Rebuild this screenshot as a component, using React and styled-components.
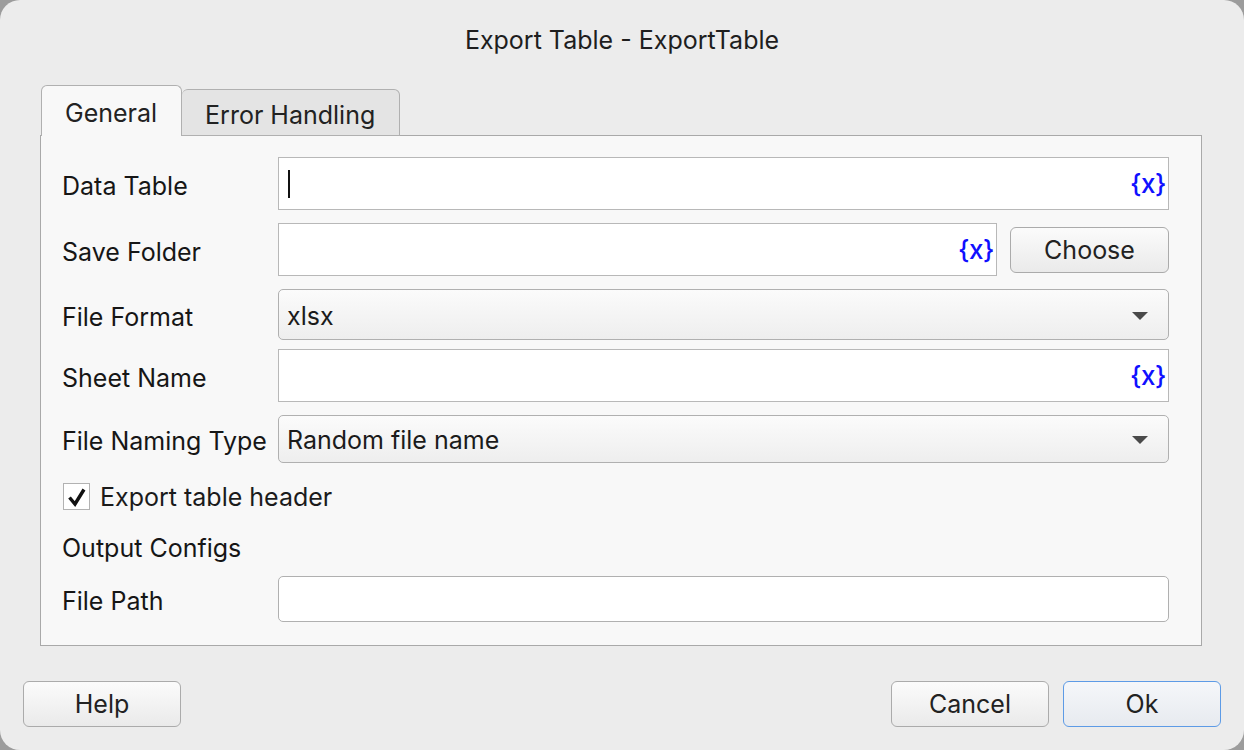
import styled, { createGlobalStyle } from "styled-components";

const GlobalStyle = createGlobalStyle`
  html, body {
    margin: 0;
    padding: 0;
    background: #9c9c9c;
  }
  body {
    font-family: Inter, "Liberation Sans", Arial, sans-serif;
    -webkit-font-smoothing: antialiased;
  }
`;

const fields = [
  { label: "Data Table", kind: "var", caret: true, h: 53, gap: 0 },
  { label: "Save Folder", kind: "folder", h: 53, gap: 13 },
  { label: "File Format", kind: "select", value: "xlsx", h: 51, gap: 13 },
  { label: "Sheet Name", kind: "var", h: 53, gap: 9 },
  { label: "File Naming Type", kind: "select", value: "Random file name", h: 48, gap: 13 },
];

export default function App() {
  return (
    <>
      <GlobalStyle />
      <Window>
        <Title>Export Table - ExportTable</Title>
        <Tabs>
          <Tab $active>General</Tab>
          <Tab>Error Handling</Tab>
        </Tabs>
        <Panel>
          {fields.map((f) => (
            <Row key={f.label} $h={f.h} $gap={f.gap}>
              <Label>{f.label}</Label>
              {f.kind === "var" && (
                <TextBox>
                  {f.caret && <Caret />}
                  <VarMark>{"{x}"}</VarMark>
                </TextBox>
              )}
              {f.kind === "folder" && (
                <>
                  <TextBox>
                    <VarMark>{"{x}"}</VarMark>
                  </TextBox>
                  <ChooseButton>Choose</ChooseButton>
                </>
              )}
              {f.kind === "select" && (
                <Select>
                  <span>{f.value}</span>
                  <Arrow />
                </Select>
              )}
            </Row>
          ))}
          <CheckRow>
            <CheckBox>
              <svg width="20" height="20" viewBox="0 0 20 20">
                <path d="M2.5 10.5 L8 17 L17 2.5" fill="none" stroke="#111" strokeWidth="3.4" strokeLinejoin="miter" />
              </svg>
            </CheckBox>
            <span>Export table header</span>
          </CheckRow>
          <Section>Output Configs</Section>
          <Row $h={46} $gap={13}>
            <Label>File Path</Label>
            <PathBox />
          </Row>
        </Panel>
        <Footer>
          <Button>Help</Button>
          <Spacer />
          <Button>Cancel</Button>
          <Button $primary>Ok</Button>
        </Footer>
      </Window>
    </>
  );
}

const Window = styled.div`
  width: 1244px;
  height: 750px;
  box-sizing: border-box;
  background: #ececec;
  border-radius: 20px;
  display: flex;
  flex-direction: column;
  color: #1b1b1b;
  overflow: hidden;
`;

const Title = styled.div`
  height: 85px;
  line-height: 80px;
  text-align: center;
  font-size: 25px;
  color: #1e1e1e;
`;

const Tabs = styled.div`
  display: flex;
  align-items: flex-end;
  margin-left: 41px;
  height: 51px;
  margin-bottom: -1px;
  position: relative;
  z-index: 1;
`;

const Tab = styled.div`
  box-sizing: border-box;
  height: ${(p) => (p.$active ? "51px" : "47px")};
  padding: ${(p) => (p.$active ? "4px 24px 0 23px" : "5px 24px 0 23px")};
  display: flex;
  align-items: center;
  font-size: 25px;
  color: #222;
  background: ${(p) => (p.$active ? "#f8f8f8" : "#e4e4e4")};
  border: 1.5px solid #b0b0b0;
  border-bottom: ${(p) => (p.$active ? "none" : "1.5px solid #b0b0b0")};
  border-left: ${(p) => (p.$active ? "1.5px solid #b0b0b0" : "none")};
  border-radius: 6px 6px 0 0;
`;

const Panel = styled.div`
  margin: 0 42px 0 40px;
  height: 511px;
  box-sizing: border-box;
  background: #f8f8f8;
  border: 1.5px solid #a9a9a9;
  padding: 21px 32px 0 21px;
  display: flex;
  flex-direction: column;
`;

const Row = styled.div`
  display: flex;
  align-items: center;
  height: ${(p) => p.$h}px;
  margin-top: ${(p) => p.$gap}px;
  gap: 13px;
`;

const Label = styled.div`
  width: 203px;
  flex: none;
  font-size: 25px;
  padding-top: 4px;
  color: #161616;
  white-space: nowrap;
`;

const TextBox = styled.div`
  flex: 1;
  height: 100%;
  box-sizing: border-box;
  background: #fff;
  border: 1.5px solid #b8b8b8;
  display: flex;
  align-items: center;
  padding: 0 2px 0 9px;
`;

const Caret = styled.div`
  width: 2px;
  height: 28px;
  background: #111;
`;

const VarMark = styled.span`
  margin-left: auto;
  color: #1010ff;
  font-size: 26px;
  font-weight: 500;
  letter-spacing: -0.5px;
`;

const ChooseButton = styled.button`
  flex: none;
  width: 159px;
  height: 46px;
  box-sizing: border-box;
  border: 1.5px solid #ababab;
  border-radius: 6px;
  background: linear-gradient(#fbfbfb, #eaeaea);
  font-family: inherit;
  font-size: 25px;
  color: #222;
`;

const Select = styled.div`
  flex: 1;
  height: 100%;
  box-sizing: border-box;
  border: 1.5px solid #b0b0b0;
  border-radius: 5px;
  background: linear-gradient(#fbfbfb, #eeeeee);
  display: flex;
  align-items: center;
  padding: 2px 20px 0 8px;
  font-size: 25px;
  color: #1b1b1b;
`;

const Arrow = styled.span`
  margin-left: auto;
  width: 0;
  height: 0;
  border-left: 8px solid transparent;
  border-right: 8px solid transparent;
  border-top: 8px solid #4a4a4a;
`;

const CheckRow = styled.div`
  display: flex;
  align-items: center;
  gap: 10px;
  margin-top: 20px;
  height: 27px;
  font-size: 25px;
  color: #1b1b1b;
`;

const CheckBox = styled.div`
  width: 27px;
  height: 27px;
  box-sizing: border-box;
  border: 1.5px solid #b2b2b2;
  background: #fff;
  display: flex;
  align-items: center;
  justify-content: center;
  margin-left: 1px;
`;

const Section = styled.div`
  margin-top: 23px;
  height: 30px;
  line-height: 30px;
  font-size: 25px;
  color: #161616;
`;

const PathBox = styled.div`
  flex: 1;
  height: 100%;
  box-sizing: border-box;
  background: #fff;
  border: 1.5px solid #b0b0b0;
  border-radius: 5px;
`;

const Footer = styled.div`
  display: flex;
  align-items: center;
  gap: 14px;
  padding: 35px 23px 0 23px;
`;

const Spacer = styled.div`
  flex: 1;
`;

const Button = styled.button`
  width: 158px;
  height: 46px;
  box-sizing: border-box;
  border: 1.5px solid ${(p) => (p.$primary ? "#5d9be6" : "#ababab")};
  border-radius: 6px;
  background: ${(p) => (p.$primary ? "linear-gradient(#f5f7fa, #e7eaef)" : "linear-gradient(#fbfbfb, #eaeaea)")};
  font-family: inherit;
  font-size: 25px;
  color: #222;
`;
